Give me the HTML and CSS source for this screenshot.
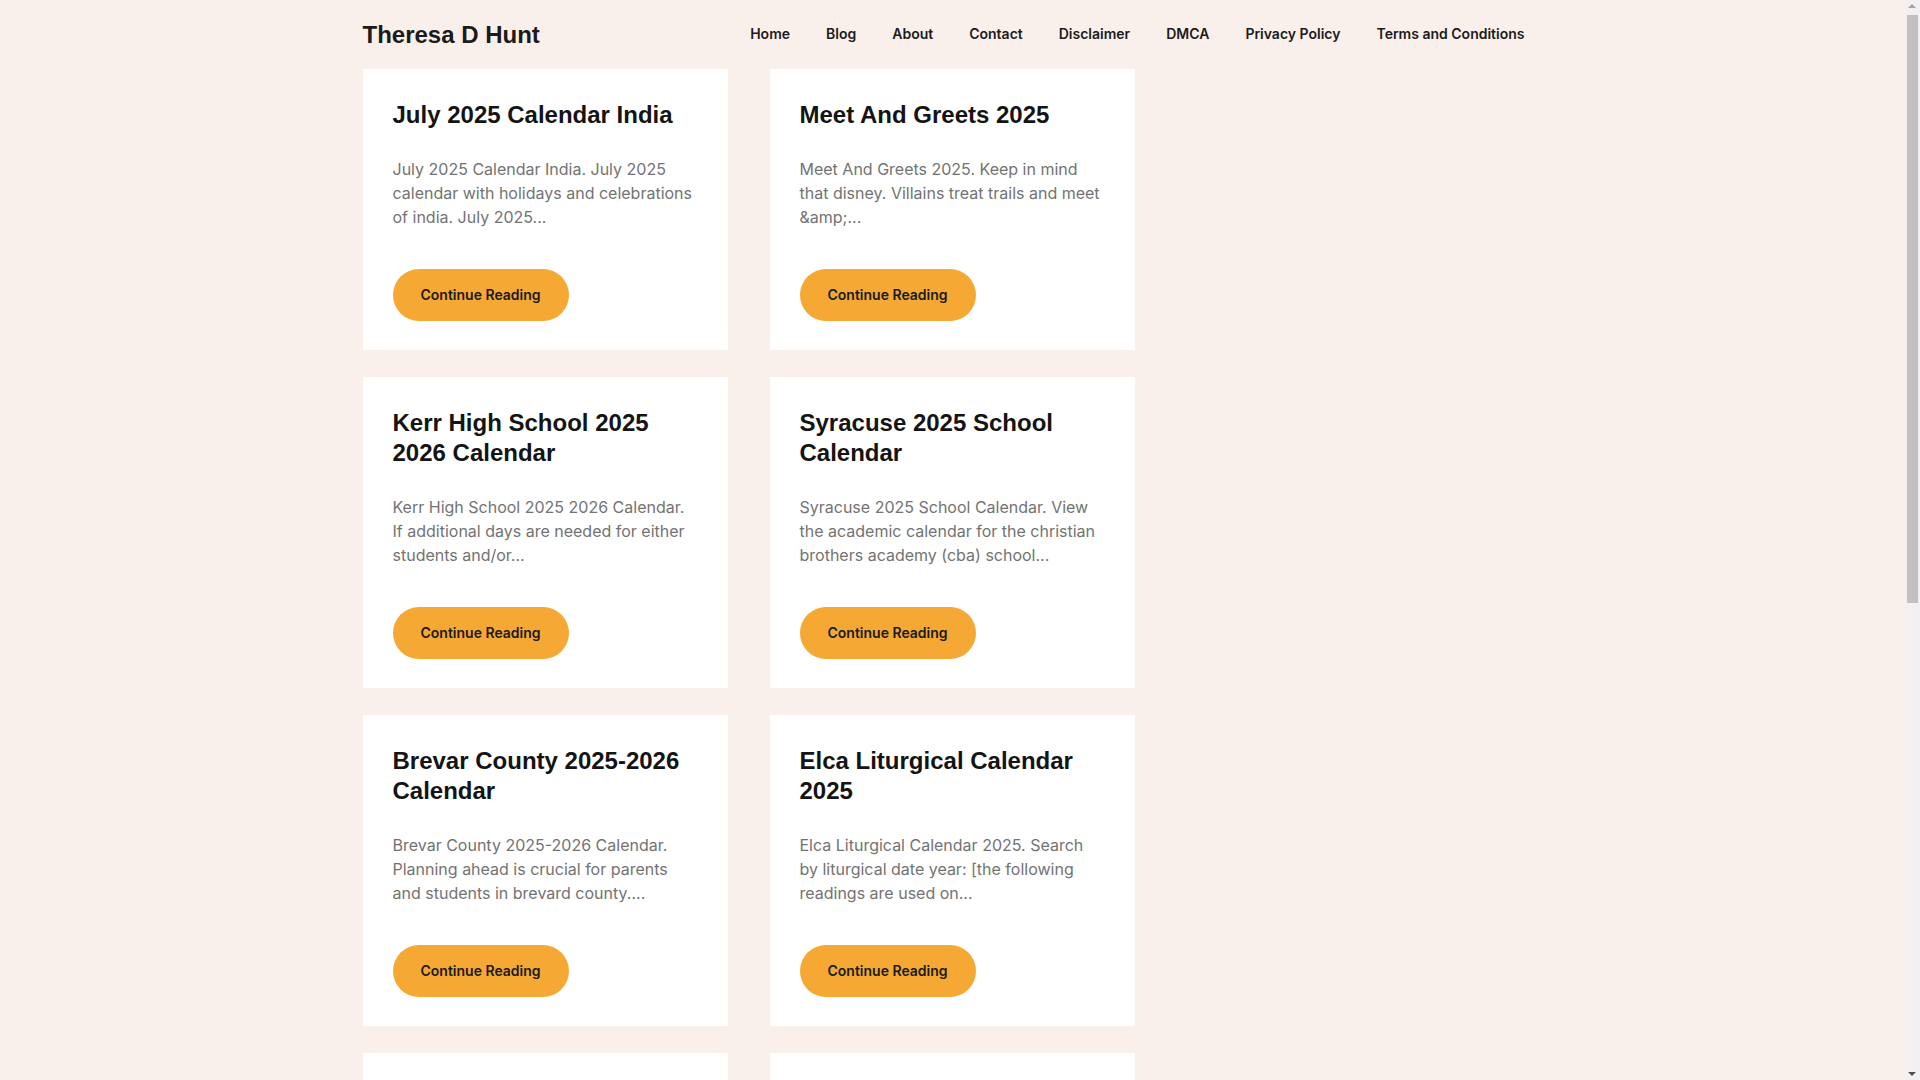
FILE: index.html
```html
<!DOCTYPE html>
<html lang="en">
<head>
  <meta charset="UTF-8">
  <title>Theresa D Hunt</title>
  <link rel="stylesheet" href="styles.css">
</head>
<body>
  <header class="site-header">
    <div class="container header-inner">
      <a class="site-title" href="#">Theresa D Hunt</a>
      <nav class="main-nav">
        <a href="#">Home</a>
        <a href="#">Blog</a>
        <a href="#">About</a>
        <a href="#">Contact</a>
        <a href="#">Disclaimer</a>
        <a href="#">DMCA</a>
        <a href="#">Privacy Policy</a>
        <a href="#">Terms and Conditions</a>
      </nav>
    </div>
  </header>

  <div class="container content">
    <main class="posts">
      <article class="post">
        <h2 class="post-title">July 2025 Calendar India</h2>
        <p class="excerpt">July 2025 Calendar India. July 2025 calendar with holidays and celebrations of india. July 2025...</p>
        <a class="read-more" href="#">Continue Reading</a>
      </article>
      <article class="post">
        <h2 class="post-title">Meet And Greets 2025</h2>
        <p class="excerpt">Meet And Greets 2025. Keep in mind that disney. Villains treat trails and meet &amp;amp;...</p>
        <a class="read-more" href="#">Continue Reading</a>
      </article>
      <article class="post">
        <h2 class="post-title">Kerr High School 2025 2026 Calendar</h2>
        <p class="excerpt">Kerr High School 2025 2026 Calendar. If additional days are needed for either students and/or...</p>
        <a class="read-more" href="#">Continue Reading</a>
      </article>
      <article class="post">
        <h2 class="post-title">Syracuse 2025 School Calendar</h2>
        <p class="excerpt">Syracuse 2025 School Calendar. View the academic calendar for the christian brothers academy (cba) school...</p>
        <a class="read-more" href="#">Continue Reading</a>
      </article>
      <article class="post">
        <h2 class="post-title">Brevar County 2025-2026 Calendar</h2>
        <p class="excerpt">Brevar County 2025-2026 Calendar. Planning ahead is crucial for parents and students in brevard county....</p>
        <a class="read-more" href="#">Continue Reading</a>
      </article>
      <article class="post">
        <h2 class="post-title">Elca Liturgical Calendar 2025</h2>
        <p class="excerpt">Elca Liturgical Calendar 2025. Search by liturgical date year: [the following readings are used on...</p>
        <a class="read-more" href="#">Continue Reading</a>
      </article>
      <article class="post">
        <h2 class="post-title">Lunar Calendar August 2025</h2>
        <p class="excerpt">Lunar Calendar August 2025. See the moon phases for every day of august 2025 with rise and set...</p>
        <a class="read-more" href="#">Continue Reading</a>
      </article>
      <article class="post">
        <h2 class="post-title">Tamu Academic Calendar 2025</h2>
        <p class="excerpt">Tamu Academic Calendar 2025. Important dates for registration, classes and final exams at texas a&amp;m...</p>
        <a class="read-more" href="#">Continue Reading</a>
      </article>
    </main>
  </div>

  <!-- the window scrollbar, drawn since the page keeps going below -->
  <div class="scrollbar">
    <span class="arrow up"></span>
    <span class="thumb"></span>
    <span class="arrow down"></span>
  </div>
</body>
</html>
```

FILE: styles.css
```css
body {
  margin: 0 15px 0 0;
  background: #faf0eb;
  color: #222;
  font-family: Inter, "Noto Sans", sans-serif;
}

a {
  text-decoration: none;
}

.container {
  width: 1180px;
  margin: 0 auto;
}

.header-inner {
  display: flex;
  align-items: center;
  justify-content: space-between;
  height: 69px;
}

.site-title {
  font-family: "Liberation Sans", Arial, sans-serif;
  font-size: 24px;
  font-weight: 700;
  color: #1b1b1b;
}

.main-nav {
  display: flex;
  padding-bottom: 2px;
}

.main-nav a {
  padding: 0 18px;
  font-size: 14px;
  font-weight: 600;
  line-height: 64px;
  color: #1b1b1b;
}

.posts {
  width: 772px;
  display: grid;
  grid-template-columns: 1fr 1fr;
  column-gap: 42px;
  row-gap: 27px;
  padding-bottom: 40px;
}

.post {
  background: #fff;
  padding: 31px 30px 29px;
  display: flex;
  flex-direction: column;
  align-items: flex-start;
}

.post-title {
  margin: 0 0 27px;
  font-family: "Liberation Sans", Arial, sans-serif;
  font-size: 24px;
  line-height: 30px;
  font-weight: 700;
  color: #141414;
}

.excerpt {
  margin: 0 0 40px;
  font-size: 16px;
  line-height: 24px;
  color: #737373;
}

.read-more {
  display: inline-block;
  margin-top: auto;
  padding: 0 28px;
  height: 52px;
  line-height: 52px;
  border-radius: 26px;
  background: #f5a834;
  color: #1a1a1a;
  font-size: 14px;
  font-weight: 600;
}

.scrollbar {
  position: fixed;
  top: 0;
  right: 0;
  width: 15px;
  height: 100vh;
  background: #f1f1f1;
}

.scrollbar .thumb {
  position: absolute;
  top: 15px;
  left: 2px;
  width: 11px;
  height: 588px;
  background: #c1c1c1;
}

.scrollbar .arrow {
  position: absolute;
  left: 3px;
  width: 0;
  height: 0;
  border-left: 4px solid transparent;
  border-right: 4px solid transparent;
}

.scrollbar .up {
  top: 4px;
  border-bottom: 4px solid #a3a3a3;
}

.scrollbar .down {
  bottom: 4px;
  border-top: 4px solid #505050;
}
```
